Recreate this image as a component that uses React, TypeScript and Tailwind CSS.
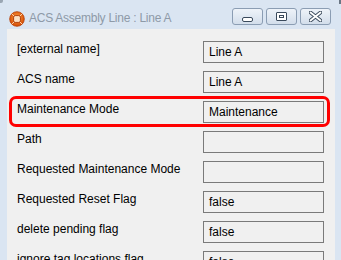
import React from "react";

const rows: { label: string; value: string; hl?: boolean }[] = [
  { label: "[external name]", value: "Line A" },
  { label: "ACS name", value: "Line A" },
  { label: "Maintenance Mode", value: "Maintenance", hl: true },
  { label: "Path", value: "" },
  { label: "Requested Maintenance Mode", value: "" },
  { label: "Requested Reset Flag", value: "false" },
  { label: "delete pending flag", value: "false" },
  { label: "ignore tag locations flag", value: "false" },
];

function AppIcon() {
  return (
    <svg width="16" height="16" viewBox="0 0 16 16">
      <defs>
        <radialGradient id="g" cx="50%" cy="40%" r="60%">
          <stop offset="0%" stopColor="#ff9a3c" />
          <stop offset="100%" stopColor="#d24a05" />
        </radialGradient>
      </defs>
      <circle cx="8" cy="8" r="7.3" fill="url(#g)" stroke="#b33a00" strokeWidth="0.8" />
      <rect x="4.6" y="4.6" width="6.8" height="6.8" rx="1.6" fill="#fbe0c4" stroke="#a83300" strokeWidth="0.9" />
      <path d="M2.6 2.6 L5 5 M13.4 2.6 L11 5 M2.6 13.4 L5 11 M13.4 13.4 L11 11" stroke="#ffd2a8" strokeWidth="1" />
    </svg>
  );
}

function CaptionButton({ children }: { children: React.ReactNode }) {
  return (
    <div className="w-[31px] h-[17px] rounded-[3px] border border-[#8b9db3] bg-gradient-to-b from-[#eef3f9] to-[#d3deeb] flex items-center justify-center">
      {children}
    </div>
  );
}

export default function App() {
  return (
    <div
      className="w-[341px] h-[260px] overflow-hidden bg-[#dae5f2] flex flex-col relative"
      style={{ fontFamily: '"Liberation Sans", Arial, sans-serif' }}
    >
      <div className="absolute left-0 top-0 w-[3px] h-[3px] bg-[#9aa6b3] rounded-br-[2px]" />
      <div className="absolute right-0 top-0 w-[2px] h-[4px] bg-[#6a7684]" />
      {/* title bar */}
      <div className="h-[29px] flex items-start shrink-0">
        <div className="ml-[9px] mt-[11px]">
          <AppIcon />
        </div>
        <div className="ml-[4px] mt-[10px] text-[12px] leading-[16px] text-[#8e9aa8] tracking-[-0.25px]">
          ACS Assembly Line : Line A
        </div>
        <div className="ml-auto mr-[10px] mt-[8px] flex gap-[3px]">
          <CaptionButton>
            <div className="w-[11px] h-[5px] mt-[5px] rounded-[2px] border border-[#3a4a5c] bg-white" />
          </CaptionButton>
          <CaptionButton>
            <div className="w-[11px] h-[9px] rounded-[1px] border border-[#3a4a5c] bg-white flex items-center justify-center">
              <div className="w-[5px] h-[3px] border border-[#3a4a5c]" />
            </div>
          </CaptionButton>
          <CaptionButton>
            <svg width="13" height="11" viewBox="0 0 13 11">
              <path
                d="M1.5 1.5 L11.5 9.5 M11.5 1.5 L1.5 9.5"
                stroke="#3a4a5c"
                strokeWidth="3.6"
                strokeLinecap="round"
              />
              <path
                d="M1.5 1.5 L11.5 9.5 M11.5 1.5 L1.5 9.5"
                stroke="#ffffff"
                strokeWidth="1.8"
                strokeLinecap="round"
              />
            </svg>
          </CaptionButton>
        </div>
      </div>
      {/* client */}
      <div className="mx-[7px] mr-[6px] flex-1 bg-[#f0f0f0] pt-[12px] pl-[10px] flex flex-col gap-[8px]">
        {rows.map((r) => (
          <div key={r.label} className="relative flex items-start h-[22px] shrink-0">
            {r.hl && (
              <div className="absolute left-[-8px] right-[5px] top-[-5px] bottom-[-4px] border-[3px] border-[#ff0000] rounded-[7px]" />
            )}
            <div className="w-[186px] text-[12px] leading-[16px] text-black whitespace-nowrap">
              {r.label}
            </div>
            <div className="w-[121px] h-[22px] border border-[#7a7a7a] bg-[#f0f0f0] flex items-center pl-[5px] text-[12px] text-black">
              {r.value}
            </div>
          </div>
        ))}
      </div>
    </div>
  );
}
